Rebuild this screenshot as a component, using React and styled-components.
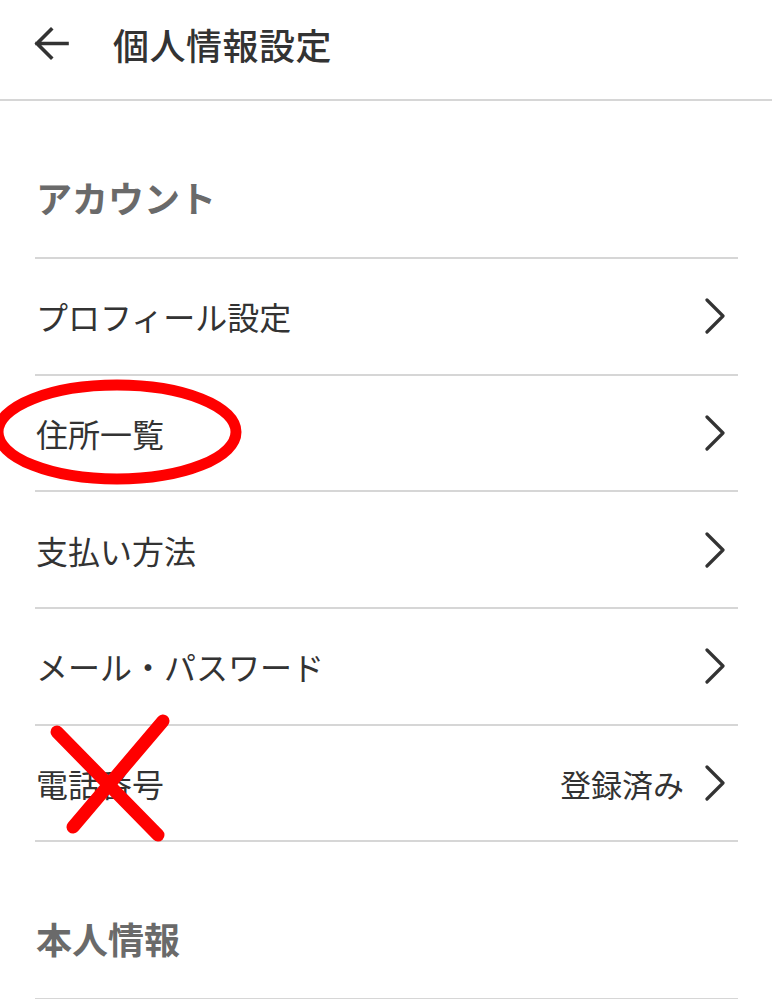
import styled, { createGlobalStyle } from "styled-components";

const GlobalStyle = createGlobalStyle`
  body {
    margin: 0;
    background: #fff;
    font-family: "Noto Sans CJK JP", "Noto Sans", sans-serif;
  }
`;

const Page = styled.div`
  position: relative;
  width: 772px;
  min-height: 999px;
  overflow: hidden;
  background: #fff;
`;

// top app bar
const Header = styled.header`
  display: flex;
  align-items: center;
  gap: 43px;
  height: 101px;
  padding: 0 0 12px 33px;
  border-bottom: 2px solid #d6d6d6;
  box-sizing: border-box;
`;

const BackButton = styled.button`
  display: flex;
  align-items: center;
  justify-content: center;
  width: 37px;
  height: 37px;
  padding: 0;
  border: none;
  background: none;
`;

const Title = styled.h1`
  margin: 0;
  font-size: 36px;
  font-weight: 500;
  color: #333;
  letter-spacing: 0.5px;
`;

const Content = styled.div`
  padding: 0 34px 0 35px;
`;

const SectionTitle = styled.h2`
  margin: 0;
  padding: 72px 0 36px 1px;
  font-size: 36px;
  line-height: 48px;
  font-weight: 700;
  color: #6a6a6a;
  border-bottom: 2px solid #d6d6d6;
`;

const Row = styled.div`
  display: flex;
  align-items: center;
  height: 116.7px;
  border-bottom: 2px solid #d6d6d6;
  box-sizing: border-box;
  padding: 0 12px 0 1px;
`;

const Label = styled.span`
  flex: 1;
  font-size: 32px;
  color: #333;
`;

const Value = styled.span`
  font-size: 31px;
  color: #333;
  margin-right: 20px;
`;

const Chevron = () => (
  <svg width="22" height="36" viewBox="0 0 22 36">
    <polyline
      points="3,2 19,18 3,34"
      fill="none"
      stroke="#333"
      strokeWidth="3.2"
      strokeLinecap="round"
      strokeLinejoin="round"
    />
  </svg>
);

// red hand-drawn marks over the list
const Marks = styled.svg`
  position: absolute;
  left: 0;
  top: 0;
  pointer-events: none;
`;

const rows = [
  { label: "プロフィール設定" },
  { label: "住所一覧" },
  { label: "支払い方法" },
  { label: "メール・パスワード" },
  { label: "電話番号", value: "登録済み" },
];

const App = () => {
  return (
    <Page>
      <GlobalStyle />
      <Header>
        <BackButton aria-label="戻る">
          <svg width="37" height="37" viewBox="0 0 37 37">
            <path
              d="M34 18.5H4M18 4.5L4 18.5l14 14"
              fill="none"
              stroke="#333"
              strokeWidth="3.6"
              strokeLinecap="square"
            />
          </svg>
        </BackButton>
        <Title>個人情報設定</Title>
      </Header>
      <Content>
        <SectionTitle>アカウント</SectionTitle>
        {rows.map((r) => (
          <Row key={r.label}>
            <Label>{r.label}</Label>
            {r.value && <Value>{r.value}</Value>}
            <Chevron />
          </Row>
        ))}
        <SectionTitle>本人情報</SectionTitle>
      </Content>
      <Marks width="772" height="999" viewBox="0 0 772 999">
        <ellipse
          cx="117"
          cy="432"
          rx="119"
          ry="47"
          fill="none"
          stroke="#f00"
          strokeWidth="11"
        />
        <path
          d="M57 732L158 835M163 721L73 827"
          fill="none"
          stroke="#f00"
          strokeWidth="13"
          strokeLinecap="round"
        />
      </Marks>
    </Page>
  );
};

export default App;
